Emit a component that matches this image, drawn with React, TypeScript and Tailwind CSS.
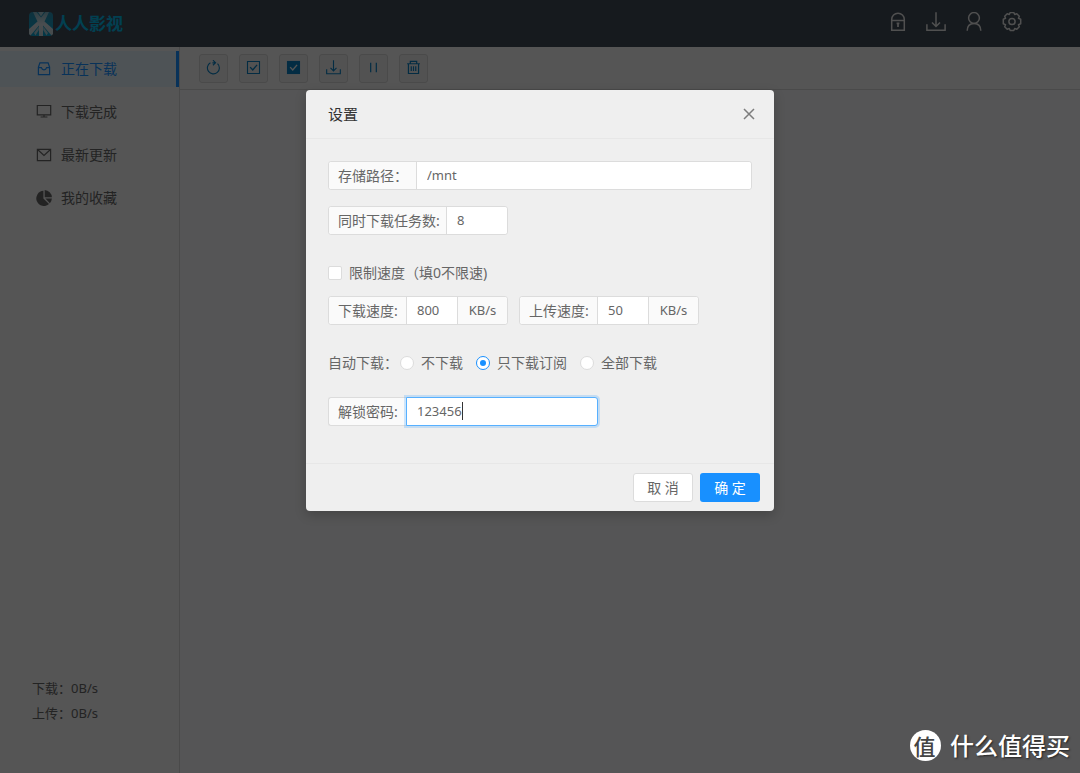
import React, { useState } from 'react';

interface IconProps {
  className?: string;
}

const LockIcon = ({ className }: IconProps) => (
  <svg viewBox="0 0 20 20" className={className} fill="none" stroke="currentColor" strokeWidth="1.5">
    <path d="M3.7 18.2V7.5a6.3 6.3 0 0 1 12.6 0v10.7zM3.7 8.500h12.600" />
    <path d="M8.600 11.300h2.800M10 11.300v3.600" strokeWidth="1.8" />
  </svg>
);

const DownloadIcon = ({ className }: IconProps) => (
  <svg viewBox="0 0 20 20" className={className} fill="none" stroke="currentColor" strokeWidth="1.5">
    <path d="M10 .3v14M6 10.500l4 4 4-4M.9 12.300v6h18.200v-6" />
  </svg>
);

const UserIcon = ({ className }: IconProps) => (
  <svg viewBox="0 0 20 20" className={className} fill="none" stroke="currentColor" strokeWidth="1.5">
    <circle cx="10" cy="6" r="5.400" />
    <path d="M3.200 18.800c0-4.600 2.600-7.400 6.800-7.400s6.800 2.800 6.800 7.400" />
  </svg>
);

const GearIcon = ({ className }: IconProps) => (
  <svg viewBox="0 0 20 20" className={className} fill="none" stroke="currentColor" strokeWidth="1.5" strokeLinejoin="round">
    <circle cx="10" cy="9.500" r="3.100" />
    <path d="M8.200.5h3.600l.9 2 2.100-.8 2.500 2.500-.8 2.100 2.200.9v4.600l-2.200.9.8 2.100-2.500 2.500-2.100-.8-.9 2H8.200l-.9-2-2.100.8-2.500-2.500.8-2.100-2.200-.9V7.200l2.200-.9-.8-2.100 2.500-2.500 2.100.8z" />
  </svg>
);

const ReloadIcon = ({ className }: IconProps) => (
  <svg viewBox="0 0 16 16" className={className} fill="none" stroke="currentColor" strokeWidth="1.2">
    <path d="M4.700 2.900a6.400 6.400 0 1 0 7.600.9M6.800 3h2.800M7.400.2 10.200 3 7.400 5.600" />
  </svg>
);

const CheckIcon = ({ className }: IconProps) => (
  <svg viewBox="0 0 16 16" className={className} fill="none" stroke="currentColor" strokeWidth="1.2">
    <path d="M1.600 1.600h12.800v12.800H1.600z" />
    <path d="M4.400 7.600l2.800 3 4.600-5.400" strokeWidth="1.5" />
  </svg>
);

const CheckFilledIcon = ({ className }: IconProps) => (
  <svg viewBox="0 0 16 16" className={className}>
    <path d="M1 1h14v14H1z" fill="currentColor" />
    <path d="M4.400 7.600l2.800 3 4.600-5.400" fill="none" stroke="#f2f2f2" strokeWidth="1.5" />
  </svg>
);

const PauseIcon = ({ className }: IconProps) => (
  <svg viewBox="0 0 16 16" className={className} fill="none" stroke="currentColor" strokeWidth="1.3">
    <path d="M5 3v10M11 3v10" />
  </svg>
);

const TrashIcon = ({ className }: IconProps) => (
  <svg viewBox="0 0 16 16" className={className} fill="none" stroke="currentColor" strokeWidth="1.3">
    <path d="M1.200 4h13.600M4.600 4V1.500h6.800V4M2.600 4v10.400h10.800V4M5.600 6.600v5.200M8 6.600v5.200M10.400 6.600v5.200" />
  </svg>
);

const InboxIcon = ({ className }: IconProps) => (
  <svg viewBox="0 0 16 16" className={className} fill="none" stroke="currentColor" strokeWidth="1.2">
    <path d="M2.400 6.200 3.900 1.900h8.200l1.500 4.300v7.400H2.400zM2.400 6.600h3c.4 1.500 1.400 2.200 2.600 2.200s2.200-.7 2.600-2.200h3" />
  </svg>
);

const DesktopIcon = ({ className }: IconProps) => (
  <svg viewBox="0 0 16 16" className={className} fill="none" stroke="currentColor" strokeWidth="1.2">
    <path d="M1.300 1.500h13.400v9.300H1.300zM8 10.800v2M4.600 13h6.800" />
  </svg>
);

const MailIcon = ({ className }: IconProps) => (
  <svg viewBox="0 0 16 16" className={className} fill="none" stroke="currentColor" strokeWidth="1.2">
    <path d="M1.400 2.400h13.200v11.200H1.400zM1.800 2.800 8 8.400l6.200-5.600" />
  </svg>
);

const PieIcon = ({ className }: IconProps) => (
  <svg viewBox="0 0 16 16" className={className} fill="currentColor">
    <path d="M7.400.8A7.600 7.600 0 1 0 13 14L7.400 8.600z" />
    <path d="M8.700 0a7.600 7.600 0 0 1 7.200 7.200H8.700zM9.400 8.600h6.500a7.600 7.600 0 0 1-2 4.600z" />
  </svg>
);

const LogoMark = ({ className }: IconProps) => (
  <svg viewBox="0 0 24 24" className={className}>
    <defs>
      <linearGradient id="mark" x1="0" y1="0" x2="0" y2="1">
        <stop offset="0" stopColor="#2a8fb0" />
        <stop offset="1" stopColor="#0aa0cc" />
      </linearGradient>
      <linearGradient id="beam" x1="0" y1="0" x2="0" y2="1">
        <stop offset="0" stopColor="#7fb4c6" />
        <stop offset="0.5" stopColor="#d3dde2" />
        <stop offset="1" stopColor="#c2d3da" />
      </linearGradient>
    </defs>
    <rect width="24" height="24" rx="4" fill="url(#mark)" />
    <path d="M4 0h3.500l4.500 5.500L16.500 0H20l-4.500 9.500L24 17v5l-1.500 1.500L14 13.500V24h-4V13.500L1.500 23.500 0 22v-5l8.500-7.500z" fill="url(#beam)" />
    <path d="M9 0l3 4.500L15 0z" fill="#a5c8d4" />
    <path d="M9.800 14.500 5 21l1.500 2.500L9.800 18zM14.200 14.500 19 21l-1.500 2.500L14.200 18z" fill="#a5c8d4" />
  </svg>
);

const MENU = [
  { label: '正在下载', Icon: InboxIcon },
  { label: '下载完成', Icon: DesktopIcon },
  { label: '最新更新', Icon: MailIcon },
  { label: '我的收藏', Icon: PieIcon },
];

const TOOLS = [
  { label: '刷新', Icon: ReloadIcon },
  { label: '全选', Icon: CheckIcon },
  { label: '反选', Icon: CheckFilledIcon },
  { label: '开始', Icon: DownloadIcon },
  { label: '暂停', Icon: PauseIcon },
  { label: '删除', Icon: TrashIcon },
];

const HEADER_ACTIONS = [
  { label: '锁定', Icon: LockIcon },
  { label: '下载', Icon: DownloadIcon },
  { label: '用户', Icon: UserIcon },
  { label: '设置', Icon: GearIcon },
];

const AUTO_OPTIONS = ['不下载', '只下载订阅', '全部下载'];

const groupClass = 'flex h-[29px] rounded-[3px] border border-[#dcdcdc] bg-white';
const addonClass = 'flex shrink-0 items-center bg-[#fafafa] pl-[9px] text-sm whitespace-nowrap';
const inputClass = 'min-w-0 bg-white px-[10px] text-[13px] outline-none';

interface SpeedFieldProps {
  id: string;
  label: string;
  defaultValue: string;
}

const SpeedField: React.FC<SpeedFieldProps> = ({ id, label, defaultValue }) => (
  <div className={`${groupClass} w-[180px]`}>
    <label htmlFor={id} className={`${addonClass} w-[77px] rounded-l-[3px]`}>{label}</label>
    <input id={id} defaultValue={defaultValue} className={`${inputClass} flex-1 border-x border-[#dcdcdc]`} />
    <span className="flex w-[49px] items-center justify-center rounded-r-[3px] bg-[#fafafa] text-[13px]">KB/s</span>
  </div>
);

const SettingsDialog = () => {
  const [auto, setAuto] = useState('只下载订阅');

  return (
    <div
      role="dialog"
      aria-labelledby="settings-title"
      className="w-[468px] rounded-[4px] bg-[#efefef] text-[#666] shadow-[0_4px_12px_rgba(0,0,0,0.2)]"
    >
      <div className="flex h-[49px] items-center justify-between border-b border-[#e7e7e7] px-[22px]">
        <h2 id="settings-title" className="text-[15px] text-[#333]">设置</h2>
        <button aria-label="关闭" className="-mr-[7px] grid size-5 place-items-center text-[#7d7d7d]">
          <svg viewBox="0 0 12 12" className="size-3" fill="none" stroke="currentColor" strokeWidth="1.5">
            <path d="M1 1l10 10M11 1L1 11" />
          </svg>
        </button>
      </div>

      <div className="px-[22px] pt-[22px] pb-[37px]">
        <div className={groupClass}>
          <label htmlFor="path" className={`${addonClass} w-[87px] rounded-l-[3px]`}>存储路径：</label>
          <input id="path" defaultValue="/mnt" className={`${inputClass} flex-1 rounded-r-[3px] border-l border-[#dcdcdc]`} />
        </div>

        <div className={`${groupClass} mt-4 w-[180px]`}>
          <label htmlFor="tasks" className={`${addonClass} w-[117px] rounded-l-[3px]`}>同时下载任务数:</label>
          <input id="tasks" defaultValue="8" className={`${inputClass} flex-1 rounded-r-[3px] border-l border-[#dcdcdc]`} />
        </div>

        <label className="mt-7 flex h-5 items-center gap-[7px] text-sm">
          <input type="checkbox" className="size-[14px] appearance-none rounded-[2px] border border-[#dcdcdc] bg-white checked:bg-[#1890ff]" />
          限制速度（填0不限速)
        </label>

        <div className="mt-[13px] flex gap-[11px]">
          <SpeedField id="down-speed" label="下载速度:" defaultValue="800" />
          <SpeedField id="up-speed" label="上传速度:" defaultValue="50" />
        </div>

        <fieldset className="mt-7 flex h-5 items-center text-sm">
          <legend className="float-left w-[72px] leading-5">自动下载：</legend>
          <div className="flex gap-[13px]">
            {AUTO_OPTIONS.map(option => (
              <label key={option} className="flex items-center gap-[7px] leading-5">
                <input
                  type="radio"
                  name="auto"
                  checked={auto === option}
                  onChange={() => setAuto(option)}
                  className="grid size-[14px] appearance-none place-items-center rounded-full border border-[#dcdcdc] bg-white checked:border-[#1890ff] checked:before:size-[6px] checked:before:rounded-full checked:before:bg-[#1890ff]"
                />
                {option}
              </label>
            ))}
          </div>
        </fieldset>

        <div className="mt-6 flex h-[29px] w-[270px]">
          <label htmlFor="password" className={`${addonClass} w-[78px] rounded-l-[3px] border border-r-0 border-[#dcdcdc]`}>解锁密码:</label>
          <div className="relative flex flex-1">
            <input
              id="password"
              defaultValue="123456"
              className={`${inputClass} w-full rounded-r-[3px] border border-[#57b0ff] shadow-[0_0_0_2px_rgba(24,144,255,0.2)]`}
            />
            <span className="absolute top-[5px] left-14 h-[18px] w-px bg-[#333]" />
          </div>
        </div>
      </div>

      <div className="flex justify-end gap-[7px] border-t border-[#e7e7e7] px-[14px] py-[9px] text-sm">
        <button className="h-[29px] w-[60px] rounded-[3px] border border-[#dcdcdc] bg-white">取 消</button>
        <button className="h-[29px] w-[60px] rounded-[3px] bg-[#1890ff] text-white">确 定</button>
      </div>
    </div>
  );
};

const App = () => {
  const [active, setActive] = useState('正在下载');

  return (
    <div className="relative flex h-screen flex-col overflow-hidden bg-[#f2f2f2] font-['Noto_Sans','Noto_Sans_CJK_SC',sans-serif] text-[#666]">
      <header className="flex h-[47px] shrink-0 items-center justify-between bg-[#404b57] pr-[58px] pl-[29px]">
        <div className="flex items-center gap-[2px]">
          <LogoMark className="size-6" />
          <span className="text-[17px] font-bold text-[#06b8e8]">人人影视</span>
        </div>
        <nav className="flex gap-[18px] pb-[3px] text-[#e4e4e4]">
          {HEADER_ACTIONS.map(({ label, Icon }) => (
            <button key={label} aria-label={label}>
              <Icon className="size-5" />
            </button>
          ))}
        </nav>
      </header>

      <div className="flex min-h-0 flex-1">
        <aside className="flex w-[180px] shrink-0 flex-col border-r border-[#d4d4d4]">
          <nav className="flex flex-col gap-[7px] pt-1">
            {MENU.map(({ label, Icon }) => (
              <button
                key={label}
                onClick={() => setActive(label)}
                className={`flex h-9 items-center gap-[9px] pl-9 text-sm ${
                  active === label
                    ? 'border-r-[3px] border-[#1890ff] bg-[#deeef6] text-[#1890ff]'
                    : ''
                }`}
              >
                <Icon className="size-4" />
                {label}
              </button>
            ))}
          </nav>
          <div className="mt-auto pb-[47px] pl-8 text-[13px] leading-[25px]">
            <p>下载：0B/s</p>
            <p>上传：0B/s</p>
          </div>
        </aside>

        <main className="flex min-w-0 flex-1 flex-col bg-[#f2f2f6]">
          <div className="flex h-[43px] items-center gap-[11px] border-b border-[#d4d4d4] bg-[#f2f2f2] pl-[19px]">
            {TOOLS.map(({ label, Icon }) => (
              <button
                key={label}
                aria-label={label}
                className="grid size-[29px] place-items-center rounded-[3px] border border-[#d4d4d4] bg-[#ececec] pb-[2px] text-[#0b7fc0]"
              >
                <Icon className="size-[15px]" />
              </button>
            ))}
          </div>
        </main>
      </div>

      {/* 遮罩 + 设置弹窗 */}
      <div className="absolute inset-0 flex items-start justify-center bg-black/65 pt-[90px]">
        <SettingsDialog />
      </div>

      {/* 右下角水印 */}
      <div className="absolute right-[10px] bottom-3 flex items-center gap-[9px] text-white">
        <span className="grid size-[31px] place-items-center rounded-full bg-white pr-[2px] text-[22px] leading-none font-medium text-[#444]">值</span>
        <span className="text-2xl leading-[31px] font-medium [text-shadow:1px_1px_2px_rgba(0,0,0,0.6)]">什么值得买</span>
      </div>
    </div>
  );
};

export default App;
